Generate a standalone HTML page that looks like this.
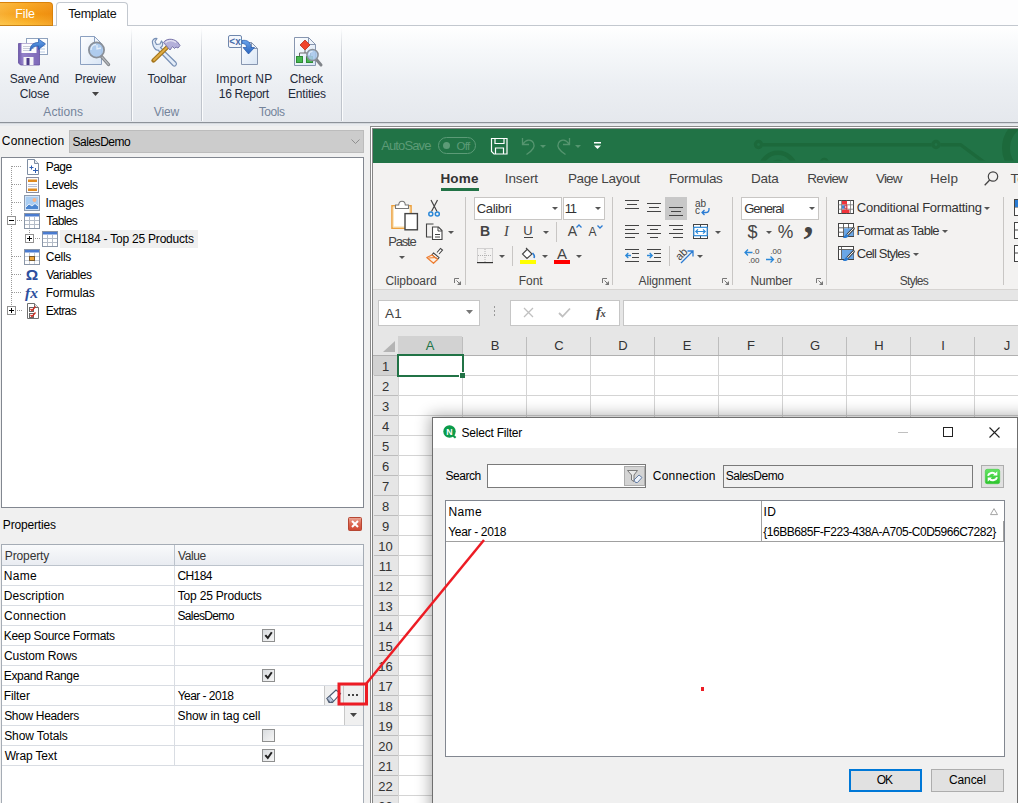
<!DOCTYPE html>
<html lang="en">
<head>
<meta charset="utf-8">
<title>Select Filter</title>
<style>
*{box-sizing:border-box;margin:0;padding:0}
html,body{width:1018px;height:803px;overflow:hidden;background:#f0f0f0}
body{position:relative;font-family:"Liberation Sans",sans-serif;font-size:12px;color:#000;line-height:1}
.a{position:absolute}
.t{position:absolute;white-space:nowrap;line-height:14px;height:14px}
.c{text-align:center}
svg{position:absolute;overflow:visible}
/* ---------- top ribbon ---------- */
#rib{left:0;top:0;width:1018px;height:123px;background:#fdfdfe}
#ribbody{left:0;top:26px;width:1018px;height:96px;background:linear-gradient(#ffffff 0,#f6f8fa 25%,#eceff3 60%,#e5e8ed 100%)}
.rl{color:#1f2a3a}
.gl{color:#74849b}
.rsep{width:2px;top:28px;height:93px;background:linear-gradient(to right,#bfc4cc 0,#bfc4cc 50%,#fbfcfd 50%);-webkit-mask-image:linear-gradient(transparent 0,#000 35%);mask-image:linear-gradient(transparent 0,#000 35%)}
/* ---------- left panel ---------- */
.tree .t{font-size:12px}
.pg .row{position:absolute;left:1px;width:361px;height:20px;border-bottom:1px solid #d9dde3;background:#fff}
.pg .row .k{position:absolute;left:2px;top:3px;line-height:14px;white-space:nowrap}
.pg .row .v{position:absolute;left:175px;top:3px;line-height:14px;white-space:nowrap}
.pg .row:after{content:"";position:absolute;left:172px;top:0;width:1px;height:20px;background:#d9dde3}
.cb{position:absolute;left:260px;top:3px;width:13px;height:13px;border:1px solid #8e8f8f;background:linear-gradient(135deg,#d9dcdf,#f6f6f6)}
/* ---------- excel ---------- */
.xl{font-size:13px;color:#444}
.xl .t{line-height:16px;height:16px}
.xsep{width:1px;top:197px;height:88px;background:#c8c6c4}
.ch{position:absolute;top:336px;height:19px;line-height:19px;text-align:center;font-size:13px;color:#333;width:64px}
.rh{position:absolute;left:373px;width:25px;height:20px;line-height:20px;text-align:center;font-size:13px;color:#333}
</style>
</head>
<body>
<div class="a" id="rib"></div>
<div class="a" id="ribbody"></div>
<div class="a" style="left:0;top:25px;width:1018px;height:1px;background:#c3c8cf"></div>
<div class="a" style="left:0;top:122px;width:1018px;height:1px;background:#8d9299"></div>
<div class="a" style="left:0;top:123px;width:1018px;height:1px;background:#d5d9de"></div>
<div class="a" style="left:0;top:124px;width:1018px;height:2px;background:#e9ebee"></div>
<div class="a" style="left:0;top:2px;width:53px;height:24px;border-radius:0 4px 0 0;background:linear-gradient(to right,rgba(255,230,150,.25),rgba(255,255,255,0) 50%,rgba(215,90,0,.22)),linear-gradient(#f9ab2a 0,#f59d14 50%,#f8a81f 70%,#fcbc38 100%);border:1px solid #d9820a;border-left:0;border-bottom-color:#c98216"></div>
<div class="t" style="left:15.30px;top:7.07px;line-height:15px;height:15px;font-size:12.5px;letter-spacing:-0.154px;color:#fff">File</div>
<div class="a" style="left:56px;top:2px;width:72px;height:24px;border-radius:4px 4px 0 0;background:#fff;border:1px solid #c3c8cf;border-bottom:0"></div>
<div class="t" style="left:68.15px;top:7.37px;line-height:15px;height:15px;font-size:12.5px;letter-spacing:-0.325px;color:#111">Template</div>
<div class="a rsep" style="left:131px"></div>
<div class="a rsep" style="left:201px"></div>
<div class="a rsep" style="left:341px"></div>
<div class="t" style="left:9.76px;top:71.84px;line-height:14px;height:14px;font-size:12px;letter-spacing:-0.291px;color:#1f2a3a">Save And</div>
<div class="t" style="left:19.70px;top:86.84px;line-height:14px;height:14px;font-size:12px;letter-spacing:-0.205px;color:#1f2a3a">Close</div>
<div class="t" style="left:74.74px;top:71.84px;line-height:14px;height:14px;font-size:12px;letter-spacing:-0.277px;color:#1f2a3a">Preview</div>
<svg style="left:92px;top:92px" width="7" height="4" viewBox="0 0 7 4"><path d="M0 0h7L3.5 4z" fill="#444"/></svg>
<div class="t" style="left:147.46px;top:71.84px;line-height:14px;height:14px;font-size:12px;letter-spacing:-0.063px;color:#1f2a3a">Toolbar</div>
<div class="t" style="left:215.92px;top:71.84px;line-height:14px;height:14px;font-size:12px;letter-spacing:0.285px;color:#1f2a3a">Import NP</div>
<div class="t" style="left:218.80px;top:86.84px;line-height:14px;height:14px;font-size:12px;letter-spacing:-0.302px;color:#1f2a3a">16 Report</div>
<div class="t" style="left:289.80px;top:71.84px;line-height:14px;height:14px;font-size:12px;letter-spacing:-0.205px;color:#1f2a3a">Check</div>
<div class="t" style="left:287.94px;top:86.84px;line-height:14px;height:14px;font-size:12px;letter-spacing:-0.183px;color:#1f2a3a">Entities</div>
<div class="t" style="left:43.30px;top:105.04px;line-height:14px;height:14px;font-size:12px;letter-spacing:0.077px;color:#74849b">Actions</div>
<div class="t" style="left:153.74px;top:105.04px;line-height:14px;height:14px;font-size:12px;letter-spacing:-0.080px;color:#74849b">View</div>
<div class="t" style="left:258.76px;top:105.04px;line-height:14px;height:14px;font-size:12px;letter-spacing:-0.415px;color:#74849b">Tools</div>
<svg style="left:18px;top:36px" width="32" height="32" viewBox="0 0 32 32"><defs><linearGradient id="fl" x1="0" y1="0" x2="1" y2="0"><stop offset="0" stop-color="#6f59ad"/><stop offset=".2" stop-color="#9381c8"/><stop offset="1" stop-color="#7d68b8"/></linearGradient>
<linearGradient id="ar" x1="0" y1="0" x2="0" y2="1"><stop offset="0" stop-color="#6aa5ec"/><stop offset="1" stop-color="#2a64bd"/></linearGradient></defs>
 <rect x="8.5" y="2.5" width="21" height="16" fill="#fdfeff" stroke="#8fa2bd"/>
 <path d="M17 7h10M17 10h10M17 13h10M17 16h10" stroke="#b9cbe3" stroke-width="1"/>
 <path d="M.5 7.5h19l2 2v19.5H2.5l-2-2z" fill="url(#fl)" stroke="#6450a0" stroke-width=".8"/>
 <rect x="3.5" y="7.5" width="15" height="9.5" fill="#fbfbfd"/>
 <path d="M5 10.5h11M5 12.5h11M5 14.5h9" stroke="#c9ccd8"/>
 <rect x="5.5" y="21" width="10" height="8" fill="#f3f3f6"/>
 <rect x="8.5" y="22" width="3" height="7" fill="#4b3a87"/>
 <path d="M12 15c0-6 3.5-8.5 8.5-8.5V3l7 5-7 5.5V10c-4 0-6.5 1.5-8.5 5z" fill="url(#ar)" stroke="#2458aa" stroke-width=".7"/></svg>
<svg style="left:79px;top:35px" width="32" height="34" viewBox="0 0 32 34"><defs><linearGradient id="pgv" x1="0" y1="0" x2="1" y2="1"><stop offset="0" stop-color="#ffffff"/><stop offset="1" stop-color="#d8e5f5"/></linearGradient></defs>
 <path d="M1.5 1.5h14l7 7v21h-21z" fill="url(#pgv)" stroke="#8ba0c0"/>
 <path d="M15.5 1.5v7h7z" fill="#eef3fa" stroke="#8ba0c0" stroke-linejoin="round"/>
 <path d="M22.5 21.5l7 8" stroke="#808489" stroke-width="3.4" stroke-linecap="round"/>
 <path d="M23 22l6.5 7.5" stroke="#b4b7bb" stroke-width="1.2" stroke-linecap="round"/>
 <circle cx="17.5" cy="15" r="7.6" fill="#a9c8ec" fill-opacity=".9" stroke="#8a9099" stroke-width="1.800"/>
 <path d="M12 15c0-3 2-5.5 5-5.5M18 10v4l4-1" stroke="#e4eefa" stroke-width="1.3" fill="none"/></svg>
<svg style="left:150px;top:37px" width="32" height="30" viewBox="0 0 32 30"><path d="M2.5 6c-1-3 2-5 4.5-4.5L5 4.5l1.5 3 3.5-.5 1.5-3c2 2 1.5 5.5-1 6.5L26 25.5c1.5 2-1 4.5-3 3L8 13C5.5 14 3 9.5 2.5 6z" fill="#e3ecf8" stroke="#7890b5" stroke-width="1.2" stroke-linejoin="round"/>
 <path d="M3.5 23.5L19 8.5" stroke="#a5761c" stroke-width="4.4" stroke-linecap="round"/>
 <path d="M4 23L19 8.5" stroke="#e0ad45" stroke-width="1.800" stroke-linecap="round"/>
 <path d="M13.5 5.5C16 1.5 23 1 27.5 5l2.5 3.5-2 2.5-2-1-1.5 1.5-2-2-2.5 3.5-6.5-7.5z" fill="#b4b0da" stroke="#7a76ab" stroke-width="1" stroke-linejoin="round"/>
 <path d="M15.5 5.5C18 3 23 3 26 5.5" stroke="#e6e4f4" stroke-width="1.3" fill="none"/></svg>
<svg style="left:227px;top:34px" width="32" height="32" viewBox="0 0 32 32"><path d="M14.5 8.5h10l6 6v16h-16z" fill="url(#pgv)" stroke="#8796b0"/>
 <path d="M24.5 8.5v6h6z" fill="#eef3fa" stroke="#8796b0" stroke-linejoin="round"/>
 <rect x="1.5" y="1.5" width="13" height="12" rx="1.5" fill="#f4f7fc" stroke="#6f87ad"/>
 <text x="8" y="11" font-size="10" font-weight="bold" text-anchor="middle" fill="#4a6ea9" font-family="Liberation Sans,sans-serif">&lt;x</text>
 <path d="M15 6.5c5.5-1 9 2 9 7h3.5L21.5 20 16 13.5h3.5c0-2.5-1.5-4-4.5-4z" fill="url(#ar)" stroke="#2458aa" stroke-width=".7"/></svg>
<svg style="left:291px;top:36px" width="34" height="32" viewBox="0 0 34 32"><path d="M3.5 1.5h14l7 7v21h-21z" fill="url(#pgv)" stroke="#8796b0"/>
 <path d="M17.5 1.5v7h7z" fill="#eef3fa" stroke="#8796b0" stroke-linejoin="round"/>
 <path d="M14 4l5 5-5 5-5-5z" fill="#f0452c" stroke="#b8301c" stroke-width=".8"/>
 <path d="M14 14v3M8.5 20v-3h11v3" stroke="#6a6a6a" fill="none"/>
 <rect x="5.5" y="20.5" width="6" height="6" fill="#46b84e" stroke="#2f8a37"/>
 <rect x="15.5" y="20.5" width="6" height="6" fill="#46b84e" stroke="#2f8a37"/>
 <path d="M25 23l5 6" stroke="#808489" stroke-width="3" stroke-linecap="round"/>
 <circle cx="21.5" cy="19" r="5.6" fill="#a9c8ec" fill-opacity=".88" stroke="#8a9099" stroke-width="1.5"/>
 <path d="M18 19c0-2 1.5-3.5 3.5-3.5" stroke="#e4eefa" stroke-width="1.2" fill="none"/></svg>
<div class="t" style="left:1.80px;top:133.84px;line-height:14px;height:14px;font-size:12px;letter-spacing:0.173px">Connection</div>
<div class="a" style="left:69px;top:130px;width:295px;height:23px;background:#cccccc;border:1px solid #bcbcbc"></div>
<div class="t" style="left:72.46px;top:134.54px;line-height:14px;height:14px;font-size:12px;letter-spacing:-0.465px">SalesDemo</div>
<svg style="left:351px;top:139px" width="9" height="6" viewBox="0 0 9 6"><path d="M.5 .5L4.5 4.5 8.5 .5" fill="none" stroke="#8f8f8f" stroke-width="1"/></svg>
<div class="a" style="left:1px;top:157px;width:363px;height:351px;background:#fff;border:1px solid #828790"></div>
<div class="a" style="left:11px;top:166px;width:1px;height:144px;background-image:linear-gradient(#9a9a9a 50%,transparent 50%);background-size:1px 2px"></div>
<div class="a" style="left:12px;top:166px;width:9px;height:1px;background-image:linear-gradient(to right,#9a9a9a 50%,transparent 50%);background-size:2px 1px"></div>
<div class="a" style="left:12px;top:184px;width:9px;height:1px;background-image:linear-gradient(to right,#9a9a9a 50%,transparent 50%);background-size:2px 1px"></div>
<div class="a" style="left:12px;top:202px;width:9px;height:1px;background-image:linear-gradient(to right,#9a9a9a 50%,transparent 50%);background-size:2px 1px"></div>
<div class="a" style="left:12px;top:256px;width:9px;height:1px;background-image:linear-gradient(to right,#9a9a9a 50%,transparent 50%);background-size:2px 1px"></div>
<div class="a" style="left:12px;top:274px;width:9px;height:1px;background-image:linear-gradient(to right,#9a9a9a 50%,transparent 50%);background-size:2px 1px"></div>
<div class="a" style="left:12px;top:292px;width:9px;height:1px;background-image:linear-gradient(to right,#9a9a9a 50%,transparent 50%);background-size:2px 1px"></div>
<div class="a" style="left:17px;top:220px;width:5px;height:1px;background-image:linear-gradient(to right,#9a9a9a 50%,transparent 50%);background-size:2px 1px"></div>
<div class="a" style="left:17px;top:310px;width:5px;height:1px;background-image:linear-gradient(to right,#9a9a9a 50%,transparent 50%);background-size:2px 1px"></div>
<div class="a" style="left:29px;top:228px;width:1px;height:5px;background-image:linear-gradient(#9a9a9a 50%,transparent 50%);background-size:1px 2px"></div>
<div class="a" style="left:35px;top:238px;width:5px;height:1px;background-image:linear-gradient(to right,#9a9a9a 50%,transparent 50%);background-size:2px 1px"></div>
<svg style="left:7px;top:216px" width="9" height="9"><rect x=".5" y=".5" width="8" height="8" fill="#fff" stroke="#919191"/><path d="M2 4.5h5" stroke="#000"/></svg>
<svg style="left:25px;top:234px" width="9" height="9"><rect x=".5" y=".5" width="8" height="8" fill="#fff" stroke="#919191"/><path d="M2 4.5h5" stroke="#000"/><path d="M4.5 2v5" stroke="#000"/></svg>
<svg style="left:7px;top:306px" width="9" height="9"><rect x=".5" y=".5" width="8" height="8" fill="#fff" stroke="#919191"/><path d="M2 4.5h5" stroke="#000"/><path d="M4.5 2v5" stroke="#000"/></svg>
<div class="a" style="left:60px;top:230px;width:138px;height:18px;background:#f0f0f0"></div>
<div class="t" style="left:45.64px;top:159.84px;line-height:14px;height:14px;font-size:12px;letter-spacing:-0.473px">Page</div>
<div class="t" style="left:45.64px;top:177.84px;line-height:14px;height:14px;font-size:12px;letter-spacing:-0.460px">Levels</div>
<div class="t" style="left:45.52px;top:195.84px;line-height:14px;height:14px;font-size:12px;letter-spacing:-0.192px">Images</div>
<div class="t" style="left:46.36px;top:213.84px;line-height:14px;height:14px;font-size:12px;letter-spacing:-0.684px">Tables</div>
<div class="t" style="left:64.20px;top:231.84px;line-height:14px;height:14px;font-size:12px;letter-spacing:-0.218px">CH184 - Top 25 Products</div>
<div class="t" style="left:45.80px;top:249.84px;line-height:14px;height:14px;font-size:12px;letter-spacing:-0.295px">Cells</div>
<div class="t" style="left:46.14px;top:267.84px;line-height:14px;height:14px;font-size:12px;letter-spacing:-0.408px">Variables</div>
<div class="t" style="left:45.64px;top:285.84px;line-height:14px;height:14px;font-size:12px;letter-spacing:-0.109px">Formulas</div>
<div class="t" style="left:45.64px;top:303.84px;line-height:14px;height:14px;font-size:12px;letter-spacing:-0.588px">Extras</div>
<svg style="left:25px;top:159px" width="16" height="16" viewBox="0 0 16 16"><path d="M2.5 .5h7l4 4v11h-11z" fill="#fff" stroke="#7f8ea3"/><path d="M9.5 .5v4h4" fill="#e6ebf2" stroke="#7f8ea3"/><path d="M4.5 8.5h4M6.5 6.5v4M8 11.5h5M10.5 9v5" stroke="#2f5fb3"/></svg>
<svg style="left:25px;top:177px" width="16" height="16" viewBox="0 0 16 16"><rect x="1.5" y=".5" width="12" height="15" fill="#fbfbfd" stroke="#8b8fa0"/><rect x="3" y="2.5" width="9" height="2.5" fill="#e08a1e"/><path d="M3 7.5h9M3 9.5h9" stroke="#b7c0d6"/><rect x="3" y="11.5" width="9" height="2.5" fill="#e08a1e"/></svg>
<svg style="left:24px;top:195px" width="16" height="16" viewBox="0 0 16 16"><rect x=".5" y=".5" width="15" height="15" fill="#cfe2f7" stroke="#8c9bb0"/><rect x="2" y="2" width="12" height="12" fill="#a9cdf2"/><circle cx="10.5" cy="5" r="2" fill="#f7b48a"/><path d="M2 12l3-3 3 2 3-2.5 3 2.5v3H2z" fill="#4b86d1"/><path d="M2 12l3-3 3 2 3-2.5 3 2.5" stroke="#fff" fill="none" stroke-width=".8"/></svg>
<svg style="left:24px;top:213px" width="16" height="16" viewBox="0 0 16 16"><rect x=".5" y=".5" width="15" height="15" fill="#fff" stroke="#8a96a8"/><rect x="1" y="1" width="14" height="2.5" fill="#4a7bd0"/><path d="M1 7.5h14M1 11.5h14M5.5 4v11M10.5 4v11" stroke="#b4bcc8"/></svg>
<svg style="left:42px;top:231px" width="16" height="16" viewBox="0 0 16 16"><rect x=".5" y=".5" width="15" height="15" fill="#fff" stroke="#8a96a8"/><rect x="1" y="1" width="14" height="2.5" fill="#4a7bd0"/><path d="M1 7.5h14M1 11.5h14M5.5 4v11M10.5 4v11" stroke="#b4bcc8"/></svg>
<svg style="left:24px;top:249px" width="16" height="16" viewBox="0 0 16 16"><rect x=".5" y=".5" width="15" height="15" fill="#fff" stroke="#8a96a8"/><rect x="1" y="1" width="14" height="2.5" fill="#4a7bd0"/><path d="M1 7.5h14M1 11.5h14M5.5 4v11M10.5 4v11" stroke="#c6ccd6"/><rect x="5.5" y="7.5" width="5" height="4" fill="#f0a63a" stroke="#7a5a2a"/></svg>
<div class="t" style="left:24px;top:266px;font-size:15.5px;line-height:18px;height:18px;font-weight:bold;color:#2d4f9e;width:16px;text-align:center">&#937;</div>
<div class="t" style="left:25px;top:284px;font-family:'Liberation Serif',serif;font-style:italic;font-weight:bold;font-size:15.5px;line-height:18px;height:18px;color:#2d4f9e;letter-spacing:0">fx</div>
<svg style="left:25px;top:303px" width="16" height="16" viewBox="0 0 16 16"><path d="M2.5 .5h7l4 4v11h-11z" fill="#fff" stroke="#6f6f6f"/><path d="M9.5 .5v4h4" fill="#e6e6e6" stroke="#6f6f6f"/><rect x="4.5" y="4.5" width="4" height="4" fill="#fff" stroke="#666"/><rect x="4.5" y="10.5" width="4" height="4" fill="#fff" stroke="#666"/><path d="M5.5 6l1.5 1.5 3.5-4M5.5 12l1.5 1.5 3.5-4" stroke="#d0281c" stroke-width="1.300" fill="none"/></svg>
<div class="t" style="left:2.84px;top:518.24px;line-height:14px;height:14px;font-size:12px;letter-spacing:-0.182px">Properties</div>
<svg style="left:348px;top:517px" width="14" height="14" viewBox="0 0 14 14"><defs><linearGradient id="rx" x1="0" y1="0" x2="0" y2="1"><stop offset="0" stop-color="#eba898"/><stop offset=".5" stop-color="#dc6650"/><stop offset="1" stop-color="#cf4630"/></linearGradient></defs><rect x=".5" y=".5" width="13" height="13" rx="1" fill="url(#rx)" stroke="#b64632"/><path d="M4 4l6 6M10 4l-6 6" stroke="#fff" stroke-width="2"/></svg>
<div class="a" style="left:1px;top:544px;width:363px;height:270px;background:#fff;border:1px solid #a5acb5"></div>
<div class="a" style="left:2px;top:545px;width:361px;height:21px;background:linear-gradient(#f9fafb,#e9ecf1);border-bottom:1px solid #bcc3cc"></div>
<div class="a" style="left:174px;top:545px;width:1px;height:21px;background:#bcc3cc"></div>
<div class="t" style="left:4.84px;top:549.24px;line-height:14px;height:14px;font-size:12px;letter-spacing:-0.129px;color:#333">Property</div>
<div class="t" style="left:177.94px;top:549.24px;line-height:14px;height:14px;font-size:12px;letter-spacing:-0.390px;color:#333">Value</div>
<div class="a" style="left:2px;top:585px;width:361px;height:1px;background:#d9dde3"></div>
<div class="t" style="left:3.74px;top:569.14px;line-height:14px;height:14px;font-size:12px;letter-spacing:0.307px">Name</div>
<div class="t" style="left:177.40px;top:569.14px;line-height:14px;height:14px;font-size:12px;letter-spacing:-0.590px">CH184</div>
<div class="a" style="left:2px;top:605px;width:361px;height:1px;background:#d9dde3"></div>
<div class="t" style="left:3.74px;top:589.14px;line-height:14px;height:14px;font-size:12px;letter-spacing:0.034px">Description</div>
<div class="t" style="left:177.76px;top:589.14px;line-height:14px;height:14px;font-size:12px;letter-spacing:-0.189px">Top 25 Products</div>
<div class="a" style="left:2px;top:625px;width:361px;height:1px;background:#d9dde3"></div>
<div class="t" style="left:4.10px;top:609.14px;line-height:14px;height:14px;font-size:12px;letter-spacing:0.129px">Connection</div>
<div class="t" style="left:177.46px;top:609.14px;line-height:14px;height:14px;font-size:12px;letter-spacing:-0.640px">SalesDemo</div>
<div class="a" style="left:2px;top:645px;width:361px;height:1px;background:#d9dde3"></div>
<div class="t" style="left:3.74px;top:629.14px;line-height:14px;height:14px;font-size:12px;letter-spacing:-0.301px">Keep Source Formats</div>
<div class="cb" style="left:262px;top:629px"><svg style="left:1px;top:1px" width="9" height="9"><path d="M1.300 4.200l2.5 2.800 4-5.800" fill="none" stroke="#222" stroke-width="2"/></svg></div>
<div class="a" style="left:2px;top:665px;width:361px;height:1px;background:#d9dde3"></div>
<div class="t" style="left:4.10px;top:649.14px;line-height:14px;height:14px;font-size:12px;letter-spacing:-0.148px">Custom Rows</div>
<div class="a" style="left:2px;top:685px;width:361px;height:1px;background:#d9dde3"></div>
<div class="t" style="left:3.74px;top:669.14px;line-height:14px;height:14px;font-size:12px;letter-spacing:-0.344px">Expand Range</div>
<div class="cb" style="left:262px;top:669px"><svg style="left:1px;top:1px" width="9" height="9"><path d="M1.300 4.200l2.5 2.800 4-5.800" fill="none" stroke="#222" stroke-width="2"/></svg></div>
<div class="a" style="left:2px;top:705px;width:361px;height:1px;background:#d9dde3"></div>
<div class="t" style="left:3.74px;top:689.14px;line-height:14px;height:14px;font-size:12px;letter-spacing:-0.100px">Filter</div>
<div class="t" style="left:177.70px;top:689.14px;line-height:14px;height:14px;font-size:12px;letter-spacing:-0.534px">Year - 2018</div>
<div class="a" style="left:2px;top:725px;width:361px;height:1px;background:#d9dde3"></div>
<div class="t" style="left:4.16px;top:709.14px;line-height:14px;height:14px;font-size:12px;letter-spacing:-0.333px">Show Headers</div>
<div class="t" style="left:177.46px;top:709.14px;line-height:14px;height:14px;font-size:12px;letter-spacing:-0.079px">Show in tag cell</div>
<div class="a" style="left:2px;top:745px;width:361px;height:1px;background:#d9dde3"></div>
<div class="t" style="left:4.16px;top:729.14px;line-height:14px;height:14px;font-size:12px;letter-spacing:-0.084px">Show Totals</div>
<div class="cb" style="left:262px;top:729px"></div>
<div class="a" style="left:2px;top:765px;width:361px;height:1px;background:#d9dde3"></div>
<div class="t" style="left:4.64px;top:749.14px;line-height:14px;height:14px;font-size:12px;letter-spacing:-0.150px">Wrap Text</div>
<div class="cb" style="left:262px;top:749px"><svg style="left:1px;top:1px" width="9" height="9"><path d="M1.300 4.200l2.5 2.800 4-5.800" fill="none" stroke="#222" stroke-width="2"/></svg></div>
<div class="a" style="left:174px;top:566px;width:1px;height:200px;background:#d9dde3"></div>
<div class="a" style="left:324px;top:686px;width:19px;height:19px;background:#f0f0f0;border-left:1px solid #c8c8c8"></div>
<svg style="left:326px;top:688px" width="16" height="16" viewBox="0 0 16 16"><path d="M1 10.5l9-8.5 4.5 3.5-8 9h-3.5z" fill="#fbfcfe" stroke="#4c5a70" stroke-width="1.100"/><path d="M4.5 14.5L1 10.5l2.5-2.5 4 4.5z" fill="#b9c7de" stroke="#4c5a70" stroke-width=".9"/></svg>
<div class="a" style="left:343px;top:686px;width:20px;height:19px;background:#f0f0f0;border-left:1px solid #c8c8c8"></div>
<div class="a" style="left:348px;top:694px;width:2px;height:2px;background:#444;box-shadow:4px 0 #444,8px 0 #444"></div>
<div class="a" style="left:344px;top:706px;width:19px;height:19px;background:#f0f0f0;border-left:1px solid #c8c8c8"></div>
<svg style="left:350px;top:713px" width="7" height="4" viewBox="0 0 7 4"><path d="M0 0h7L3.5 4z" fill="#444"/></svg>
<div class="a xl" style="left:0;top:0;width:1018px;height:803px">
<div class="a" style="left:370px;top:126px;width:660px;height:690px;border:1px solid #8a8a8a;background:#fff"></div>
<div class="a" style="left:372px;top:128px;width:660px;height:690px;border:1px solid #858585;border-right:0;border-bottom:0;background:#e6e6e6"></div>
<div class="a" style="left:373px;top:129px;width:645px;height:34px;background:#217346;overflow:hidden">
<svg style="left:0;top:0" width="645" height="34" viewBox="373 129 645 34"><defs><clipPath id="cc"><rect x="373" y="129" width="645" height="31.5"/></clipPath></defs><g fill="none" stroke="#1c693b" stroke-width="3.4" clip-path="url(#cc)"><circle cx="758.5" cy="144.5" r="3.1" stroke-width="3.2"/><path d="M763 144.7h168.5"/><circle cx="936" cy="144.5" r="3.1" stroke-width="3.2"/><path d="M940.5 144.7h20l27 20"/><circle cx="1033.5" cy="148" r="27.5" stroke-width="8"/><circle cx="778" cy="170.2" r="17.5" stroke-width="4.6"/><circle cx="778" cy="170.2" r="9.5" stroke-width="2"/><circle cx="824.3" cy="162.5" r="3.5" stroke-width="2.5"/></g></svg>
</div>
<div class="t" style="left:381.20px;top:137.50px;line-height:16px;height:16px;font-size:13px;letter-spacing:-0.881px;color:#5c9b77">AutoSave</div>
<div class="a" style="left:438px;top:137px;width:38px;height:17px;border:1px solid #5c9b77;border-radius:9px"></div>
<div class="a" style="left:443px;top:142px;width:7px;height:7px;border-radius:4px;background:#5c9b77"></div>
<div class="t" style="left:456.48px;top:139.02px;line-height:14px;height:14px;font-size:11.5px;letter-spacing:-0.681px;color:#5c9b77">Off</div>
<svg style="left:491px;top:138px" width="17" height="17" viewBox="0 0 17 17"><path d="M.5 .5h15.5v15.5H3l-2.5-2.5z" fill="none" stroke="#fff" stroke-width="1.2"/><path d="M4 .5v5h9v-5M4.5 16v-6h8v6" fill="none" stroke="#fff" stroke-width="1.2"/></svg>
<svg style="left:520px;top:136px" width="16" height="20" viewBox="0 0 16 20"><path d="M2.5 2v6.5H9M3 8C6 3 11.5 3 13.5 7S12 15 6.5 18.5" fill="none" stroke="#55956f" stroke-width="1.3"/></svg>
<svg style="left:540.0px;top:144.5px" width="6" height="3" viewBox="0 0 6 3"><path d="M0 0h6 L3.0 3z" fill="#55956f"/></svg>
<svg style="left:556px;top:136px" width="16" height="20" viewBox="0 0 16 20"><path d="M13.5 2v6.5H7M13 8C10 3 4.5 3 2.5 7S4 15 9.5 18.5" fill="none" stroke="#55956f" stroke-width="1.3"/></svg>
<svg style="left:575.0px;top:144.5px" width="6" height="3" viewBox="0 0 6 3"><path d="M0 0h6 L3.0 3z" fill="#55956f"/></svg>
<svg style="left:594px;top:142px" width="7" height="8" viewBox="0 0 7 8"><path d="M0 .75h7" stroke="#fff" stroke-width="1.5"/><path d="M0 3.5h7L3.5 7z" fill="#fff"/></svg>
<div class="a" style="left:373px;top:163px;width:645px;height:126px;background:#f3f2f1"></div>
<div class="a" style="left:373px;top:289px;width:645px;height:1px;background:#d6d4d2"></div>
<div class="t" style="left:440.42px;top:170.92px;line-height:16px;height:16px;font-size:13.5px;letter-spacing:0.196px;color:#333;font-weight:bold">Home</div>
<div class="t" style="left:504.79px;top:170.92px;line-height:16px;height:16px;font-size:13.5px;letter-spacing:-0.093px;color:#444">Insert</div>
<div class="t" style="left:567.92px;top:170.92px;line-height:16px;height:16px;font-size:13.5px;letter-spacing:-0.366px;color:#444">Page Layout</div>
<div class="t" style="left:668.92px;top:170.92px;line-height:16px;height:16px;font-size:13.5px;letter-spacing:-0.335px;color:#444">Formulas</div>
<div class="t" style="left:750.92px;top:170.92px;line-height:16px;height:16px;font-size:13.5px;letter-spacing:-0.235px;color:#444">Data</div>
<div class="t" style="left:807.32px;top:170.92px;line-height:16px;height:16px;font-size:13.5px;letter-spacing:-0.720px;color:#444">Review</div>
<div class="t" style="left:875.93px;top:170.92px;line-height:16px;height:16px;font-size:13.5px;letter-spacing:-0.786px;color:#444">View</div>
<div class="t" style="left:929.92px;top:170.92px;line-height:16px;height:16px;font-size:13.5px;letter-spacing:0.092px;color:#444">Help</div>
<div class="a" style="left:441px;top:188px;width:38px;height:3px;background:#217346"></div>
<svg style="left:984px;top:171px" width="15" height="15" viewBox="0 0 15 15"><circle cx="9" cy="5.5" r="4.7" fill="none" stroke="#444" stroke-width="1.2"/><path d="M5.7 9L.7 14.3" stroke="#444" stroke-width="1.3"/></svg>
<div class="t" style="left:1010.53px;top:170.92px;line-height:16px;height:16px;font-size:13.5px;color:#444">Te</div>
<div class="a xsep" style="left:465px"></div>
<div class="a xsep" style="left:612px"></div>
<div class="a xsep" style="left:732px"></div>
<div class="a xsep" style="left:826px"></div>
<div class="a xsep" style="left:1003px"></div>
<div class="t" style="left:385.40px;top:274.44px;line-height:14px;height:14px;font-size:12px;letter-spacing:-0.022px;color:#444">Clipboard</div>
<div class="t" style="left:518.84px;top:274.44px;line-height:14px;height:14px;font-size:12px;letter-spacing:-0.060px;color:#444">Font</div>
<div class="t" style="left:638.50px;top:274.44px;line-height:14px;height:14px;font-size:12px;letter-spacing:-0.110px;color:#444">Alignment</div>
<div class="t" style="left:750.54px;top:274.44px;line-height:14px;height:14px;font-size:12px;letter-spacing:-0.204px;color:#444">Number</div>
<div class="t" style="left:899.86px;top:274.44px;line-height:14px;height:14px;font-size:12px;letter-spacing:-0.748px;color:#444">Styles</div>
<svg style="left:453.5px;top:278px" width="7" height="7" viewBox="0 0 7 7"><path d="M.5 5V.5H5" fill="none" stroke="#777"/><path d="M2.5 2.5l3 3" fill="none" stroke="#777"/><path d="M7 3v4H3z" fill="#777"/></svg>
<svg style="left:601.5px;top:278px" width="7" height="7" viewBox="0 0 7 7"><path d="M.5 5V.5H5" fill="none" stroke="#777"/><path d="M2.5 2.5l3 3" fill="none" stroke="#777"/><path d="M7 3v4H3z" fill="#777"/></svg>
<svg style="left:721.5px;top:278px" width="7" height="7" viewBox="0 0 7 7"><path d="M.5 5V.5H5" fill="none" stroke="#777"/><path d="M2.5 2.5l3 3" fill="none" stroke="#777"/><path d="M7 3v4H3z" fill="#777"/></svg>
<svg style="left:815.5px;top:278px" width="7" height="7" viewBox="0 0 7 7"><path d="M.5 5V.5H5" fill="none" stroke="#777"/><path d="M2.5 2.5l3 3" fill="none" stroke="#777"/><path d="M7 3v4H3z" fill="#777"/></svg>
<svg style="left:388px;top:199px" width="34" height="34" viewBox="0 0 34 34"><rect x="4" y="6.8" width="19" height="22.4" fill="#fff" stroke="#eda13e" stroke-width="1.6"/><rect x="5.3" y="8.1" width="16.4" height="19.8" fill="none" stroke="#fbe3b4" stroke-width="1"/><path d="M7.5 9.5V6h3.2c.3-5 6.3-5 6.6 0h3.2v3.5z" fill="#fff" stroke="#777" stroke-width="1.1"/><rect x="17" y="14.6" width="12.4" height="16.2" fill="#fff" stroke="#444" stroke-width="1.4"/></svg>
<div class="t" style="left:388.16px;top:234.10px;line-height:16px;height:16px;font-size:13px;letter-spacing:-1.148px;color:#444">Paste</div>
<svg style="left:398.5px;top:256.0px" width="6" height="3" viewBox="0 0 6 3"><path d="M0 0h6 L3.0 3z" fill="#555"/></svg>
<svg style="left:427px;top:200px" width="14" height="17" viewBox="0 0 14 17"><path d="M4 0l6 11.5M10.5 0L4.5 11.5" stroke="#444" stroke-width="1.2" fill="none"/><circle cx="3.8" cy="14" r="2" fill="none" stroke="#2b88d8" stroke-width="1.5"/><circle cx="10.3" cy="14" r="2" fill="none" stroke="#2b88d8" stroke-width="1.5"/></svg>
<svg style="left:426px;top:223px" width="17" height="18" viewBox="0 0 17 18"><path d="M7.5 1H.5v13h5" fill="none" stroke="#444" stroke-width="1.1"/><path d="M6.5 4h6l3.5 3.5v9h-9.5z" fill="#fff" stroke="#444" stroke-width="1.1"/><path d="M12 4v4h4M9 11.5h5M9 14h5" fill="none" stroke="#444"/></svg>
<svg style="left:447.5px;top:230.5px" width="6" height="3" viewBox="0 0 6 3"><path d="M0 0h6 L3.0 3z" fill="#555"/></svg>
<svg style="left:426px;top:247px" width="17" height="18" viewBox="0 0 17 18"><path d="M11 5.5l3.5-4 2 1.5-3.5 4" fill="#fff" stroke="#444" stroke-width="1.1"/><path d="M7.5 6l5.5 4.5-1.5 2L6 8z" fill="#fff" stroke="#444" stroke-width="1.1"/><path d="M6 8L.8 10.5l6.7 5.8 4-3.8z" fill="#fdf0e3" stroke="#ed7d31" stroke-width="1.2" stroke-linejoin="round"/><path d="M2.5 11l8-.5" stroke="#ed7d31" stroke-width="1" fill="none"/></svg>
<div class="a" style="left:474px;top:197px;width:88px;height:23px;background:#fff;border:1px solid #c8c6c4"></div>
<div class="a" style="left:563px;top:197px;width:42px;height:23px;background:#fff;border:1px solid #c8c6c4"></div>
<div class="t" style="left:476.65px;top:200.50px;line-height:16px;height:16px;font-size:13px;letter-spacing:-0.316px;color:#333">Calibri</div>
<div class="t" style="left:564.73px;top:200.50px;line-height:16px;height:16px;font-size:13px;letter-spacing:-1.2px;color:#333">11</div>
<svg style="left:551.5px;top:206.5px" width="6" height="3" viewBox="0 0 6 3"><path d="M0 0h6 L3.0 3z" fill="#555"/></svg>
<svg style="left:594.5px;top:206.5px" width="6" height="3" viewBox="0 0 6 3"><path d="M0 0h6 L3.0 3z" fill="#555"/></svg>
<div class="t" style="left:480.09px;top:222.85px;line-height:17px;height:17px;font-size:14px;color:#444;font-weight:bold">B</div>
<div class="t" style="left:504.07px;top:222.81px;line-height:17px;height:17px;font-size:14.5px;color:#444;font-style:italic;font-family:'Liberation Serif',serif">I</div>
<div class="t" style="left:523.23px;top:223.00px;line-height:16px;height:16px;font-size:13px;color:#444">U</div>
<div class="a" style="left:524px;top:237px;width:9px;height:1px;background:#444"></div>
<svg style="left:542.5px;top:230.5px" width="6" height="3" viewBox="0 0 6 3"><path d="M0 0h6 L3.0 3z" fill="#555"/></svg>
<div class="a" style="left:556px;top:222px;width:1px;height:20px;background:#c8c6c4"></div>
<div class="t" style="left:567.70px;top:223.15px;line-height:17px;height:17px;font-size:14px;color:#444">A</div>
<svg style="left:576px;top:224px" width="6" height="4" viewBox="0 0 6 4"><path d="M.5 3.5L3 1l2.5 2.5" fill="none" stroke="#2b7cd3" stroke-width="1.3"/></svg>
<div class="t" style="left:588.60px;top:225.34px;line-height:14px;height:14px;font-size:12px;color:#444">A</div>
<svg style="left:597px;top:225px" width="6" height="4" viewBox="0 0 6 4"><path d="M.5 .5L3 3 5.5 .5" fill="none" stroke="#2b7cd3" stroke-width="1.3"/></svg>
<svg style="left:477px;top:248px" width="16" height="16" viewBox="0 0 16 16"><path d="M.5 .5h15M.5 .5v13M15.5 .5v13M8 1v13M1 7.5h14" fill="none" stroke="#b0b0b0" stroke-dasharray="1 1"/><path d="M0 14.6h16" stroke="#333" stroke-width="1.2"/></svg>
<svg style="left:498.5px;top:254.5px" width="6" height="3" viewBox="0 0 6 3"><path d="M0 0h6 L3.0 3z" fill="#555"/></svg>
<div class="a" style="left:512px;top:246px;width:1px;height:20px;background:#c8c6c4"></div>
<svg style="left:520px;top:247px" width="17" height="18" viewBox="0 0 17 18"><path d="M6 1l6 6-5 4.5L2.5 7 7 2.5" fill="#fff" stroke="#444" stroke-width="1.1"/><path d="M12.5 6c1.5 1.5 2.5 3 1.5 5" fill="none" stroke="#2b7cd3" stroke-width="1.6"/><rect x="0" y="13" width="16" height="4" fill="#ffff00"/></svg>
<svg style="left:541.5px;top:254.5px" width="6" height="3" viewBox="0 0 6 3"><path d="M0 0h6 L3.0 3z" fill="#555"/></svg>
<div class="t" style="left:557.00px;top:245.30px;line-height:18px;height:18px;font-size:15px;color:#444">A</div>
<div class="a" style="left:554px;top:260px;width:16px;height:4px;background:#ff0000"></div>
<svg style="left:575.5px;top:254.5px" width="6" height="3" viewBox="0 0 6 3"><path d="M0 0h6 L3.0 3z" fill="#555"/></svg>
<div class="a" style="left:665px;top:197px;width:22px;height:23px;background:#c8c8c8"></div>
<svg style="left:625px;top:200px" width="15" height="15" viewBox="0 0 15 15"><path d="M0 0.5h14M2 4.5h10M0 8.5h14" stroke="#444" fill="none"/></svg>
<svg style="left:647px;top:203px" width="15" height="15" viewBox="0 0 15 15"><path d="M0 0.5h14M2 4.5h10M0 8.5h14" stroke="#444" fill="none"/></svg>
<svg style="left:669px;top:207px" width="15" height="15" viewBox="0 0 15 15"><path d="M0 0.5h14M2 4.5h10M0 8.5h14" stroke="#444" fill="none"/></svg>
<div class="t" style="left:695px;top:199.5px;font-size:10px;line-height:7.5px;height:16px;color:#444">ab<br>c</div>
<svg style="left:701px;top:208px" width="9" height="8" viewBox="0 0 9 8"><path d="M8 0v1.5c0 2-1.5 3-3 3H1M3.5 2L1 4.5 3.5 7" fill="none" stroke="#2b7cd3" stroke-width="1.3"/></svg>
<svg style="left:625px;top:225px" width="15" height="15" viewBox="0 0 15 15"><path d="M0 0.5h14M0 4.5h10M0 8.5h14M0 12.5h10" stroke="#444" fill="none"/></svg>
<svg style="left:647px;top:225px" width="15" height="15" viewBox="0 0 15 15"><path d="M0 0.5h14M3 4.5h8M0 8.5h14M3 12.5h8" stroke="#444" fill="none"/></svg>
<svg style="left:669px;top:225px" width="15" height="15" viewBox="0 0 15 15"><path d="M0 0.5h14M4 4.5h10M0 8.5h14M4 12.5h10" stroke="#444" fill="none"/></svg>
<svg style="left:693px;top:224px" width="16" height="16" viewBox="0 0 16 16"><rect x=".5" y=".5" width="14" height="14" fill="#fff" stroke="#444"/><path d="M7.5 .5V3M7.5 12v2.5" stroke="#444" fill="none"/><rect x=".8" y="3.3" width="13.4" height="8.4" fill="#fff" stroke="#2b88d8" stroke-width="1.2"/><path d="M3 7.5h9M5 5.3L2.8 7.5 5 9.7M10 5.3l2.2 2.2L10 9.7" stroke="#2b88d8" fill="none" stroke-width="1.2"/></svg>
<svg style="left:714.5px;top:230.5px" width="6" height="3" viewBox="0 0 6 3"><path d="M0 0h6 L3.0 3z" fill="#555"/></svg>
<svg style="left:625px;top:249px" width="15" height="14" viewBox="0 0 15 14"><path d="M0 .5h14M7 4.5h7M7 8.5h7M0 12.5h14" stroke="#444" fill="none"/><path d="M6 6.5H.8M3.3 4L.8 6.5 3.3 9" stroke="#2b88d8" fill="none" stroke-width="1.3"/></svg>
<svg style="left:647px;top:249px" width="15" height="14" viewBox="0 0 15 14"><path d="M0 .5h14M7 4.5h7M7 8.5h7M0 12.5h14" stroke="#444" fill="none"/><path d="M0 6.5h5.2M2.7 4l2.5 2.5L2.7 9" stroke="#2b88d8" fill="none" stroke-width="1.3"/></svg>
<div class="a" style="left:669px;top:246px;width:1px;height:20px;background:#c8c6c4"></div>
<div class="t" style="left:676px;top:244px;font-size:11px;color:#444;transform:rotate(-45deg);transform-origin:8px 10px">ab</div>
<svg style="left:680px;top:250px" width="14" height="14" viewBox="0 0 14 14"><path d="M1 13L12.5 1.5M7.5 1h5.5v5.5" fill="none" stroke="#2b7cd3" stroke-width="1.3"/></svg>
<svg style="left:696.5px;top:254.5px" width="6" height="3" viewBox="0 0 6 3"><path d="M0 0h6 L3.0 3z" fill="#555"/></svg>
<div class="a" style="left:741px;top:197px;width:78px;height:23px;background:#fff;border:1px solid #c8c6c4"></div>
<div class="t" style="left:744.25px;top:200.50px;line-height:16px;height:16px;font-size:13px;letter-spacing:-1.020px;color:#333">General</div>
<svg style="left:808.5px;top:206.5px" width="6" height="3" viewBox="0 0 6 3"><path d="M0 0h6 L3.0 3z" fill="#555"/></svg>
<div class="t" style="left:747.42px;top:220.76px;line-height:22px;height:22px;font-size:18px;color:#444">$</div>
<svg style="left:765.5px;top:230.5px" width="6" height="3" viewBox="0 0 6 3"><path d="M0 0h6 L3.0 3z" fill="#555"/></svg>
<div class="t" style="left:777.69px;top:222.04px;line-height:21px;height:21px;font-size:17.5px;color:#444">%</div>
<div class="t" style="left:801.50px;top:216.00px;line-height:48px;height:48px;font-size:40px;color:#444;font-weight:bold;font-family:'Liberation Serif',serif">’</div>
<div class="t" style="left:745px;top:248px;font-size:8px;line-height:8.5px;height:17px;color:#444;text-align:right;width:14.5px">.0<br>.00</div>
<svg style="left:744px;top:249px" width="9" height="7" viewBox="0 0 9 7"><path d="M8.5 3.5H1M4 .5L1 3.5l3 3" fill="none" stroke="#2b88d8" stroke-width="1.3"/></svg>
<div class="t" style="left:767px;top:248px;font-size:8px;line-height:8.5px;height:17px;color:#444;text-align:right;width:14.5px">.00<br>.0</div>
<svg style="left:766px;top:256px" width="9" height="7" viewBox="0 0 9 7"><path d="M0 3.5h7.5M4.5 .5l3 3-3 3" fill="none" stroke="#2b88d8" stroke-width="1.3"/></svg>
<svg style="left:838px;top:200px" width="16" height="14" viewBox="0 0 16 14"><rect x=".5" y=".5" width="15" height="13" fill="#fff" stroke="#444"/><path d="M.5 4.8h15M.5 9.2h15M3.5 .5v13M8.5 .5v13M12.5 .5v13" stroke="#777" stroke-width=".8" fill="none"/><rect x="4" y="1" width="5" height="3.4" fill="#f0333a"/><rect x="4" y="5.3" width="3" height="3.4" fill="#3b86d6"/><rect x="7" y="5.3" width="2" height="3.4" fill="none" stroke="#f0333a" stroke-width=".8"/><rect x="4" y="9.7" width="7.5" height="3.3" fill="#f0333a"/></svg>
<svg style="left:838px;top:223px" width="17" height="15" viewBox="0 0 17 15"><rect x=".5" y=".5" width="15" height="13" fill="#fff" stroke="#444"/><path d="M.5 4.8h15M.5 9.2h15M5.5 .5v13M10.5 .5v13" stroke="#555" stroke-width=".9" fill="none"/><rect x="6" y="5.3" width="9.5" height="7.7" fill="#6aa6e6"/><path d="M15.5 5.5L8.5 12.8" stroke="#444" stroke-width="2.6" stroke-linecap="round"/><path d="M15.3 5.7L9.5 11.8" stroke="#fff" stroke-width="1" stroke-linecap="round"/><path d="M8.8 11l2 2c-1.5 2.2-4 2.2-6 1.8 1.5-.8 1.5-2.8 4-3.8z" fill="#2b7cd3"/></svg>
<svg style="left:838px;top:246px" width="17" height="15" viewBox="0 0 17 15"><rect x=".5" y=".5" width="15" height="13" fill="#fff" stroke="#444"/><path d="M.5 3.5h15M3.5 .5v13" stroke="#555" stroke-width=".9" fill="none"/><rect x="4" y="4" width="11.5" height="9" fill="#6aa6e6"/><path d="M15.5 5.5L8.5 12.8" stroke="#444" stroke-width="2.6" stroke-linecap="round"/><path d="M15.3 5.7L9.5 11.8" stroke="#fff" stroke-width="1" stroke-linecap="round"/><path d="M8.8 11l2 2c-1.5 2.2-4 2.2-6 1.8 1.5-.8 1.5-2.8 4-3.8z" fill="#2b7cd3"/></svg>
<div class="t" style="left:856.85px;top:199.50px;line-height:16px;height:16px;font-size:13px;letter-spacing:-0.275px;color:#333">Conditional Formatting</div>
<svg style="left:983.5px;top:206.5px" width="6" height="3" viewBox="0 0 6 3"><path d="M0 0h6 L3.0 3z" fill="#555"/></svg>
<div class="t" style="left:856.46px;top:222.50px;line-height:16px;height:16px;font-size:13px;letter-spacing:-0.702px;color:#333">Format as Table</div>
<svg style="left:941.5px;top:229.5px" width="6" height="3" viewBox="0 0 6 3"><path d="M0 0h6 L3.0 3z" fill="#555"/></svg>
<div class="t" style="left:856.85px;top:245.50px;line-height:16px;height:16px;font-size:13px;letter-spacing:-0.812px;color:#333">Cell Styles</div>
<svg style="left:912.5px;top:252.5px" width="6" height="3" viewBox="0 0 6 3"><path d="M0 0h6 L3.0 3z" fill="#555"/></svg>
<svg style="left:1014px;top:199px" width="6" height="17" viewBox="0 0 6 17"><rect x=".5" y=".5" width="16" height="16" fill="#fff" stroke="#444"/><path d="M.5 8h6" stroke="#444"/></svg>
<svg style="left:1014px;top:222px" width="6" height="17" viewBox="0 0 6 17"><rect x=".5" y=".5" width="16" height="16" fill="#fff" stroke="#444"/><path d="M.5 8h6" stroke="#444"/></svg>
<svg style="left:1014px;top:245px" width="6" height="17" viewBox="0 0 6 17"><rect x=".5" y=".5" width="16" height="16" fill="#fff" stroke="#444"/><path d="M.5 8h6" stroke="#444"/></svg>
<svg style="left:1015px;top:200px" width="4" height="7" viewBox="0 0 4 7"><rect x="0" y="0" width="4" height="7" fill="#2b7cd3"/></svg>
<div class="a" style="left:378px;top:300px;width:102px;height:26px;background:#fff;border:1px solid #c6c6c6"></div>
<div class="t" style="left:385.00px;top:305.62px;line-height:16px;height:16px;font-size:13.5px;letter-spacing:0.137px;color:#444">A1</div>
<svg style="left:465.5px;top:310.0px" width="7" height="4" viewBox="0 0 7 4"><path d="M0 0h7 L3.5 4z" fill="#777"/></svg>
<div class="a" style="left:494px;top:306px;width:1px;height:2px;background:#999;box-shadow:0 4px #999,0 8px #999"></div>
<div class="a" style="left:510px;top:300px;width:110px;height:26px;background:#fff;border:1px solid #c6c6c6"></div>
<svg style="left:523px;top:307px" width="11" height="11" viewBox="0 0 11 11"><path d="M1 1l9 9M10 1l-9 9" stroke="#c0c0c0" stroke-width="1.3" fill="none"/></svg>
<svg style="left:558px;top:307px" width="13" height="11" viewBox="0 0 13 11"><path d="M1 6l3.5 3.5L12 1.5" stroke="#c0c0c0" stroke-width="1.8" fill="none"/></svg>
<div class="t" style="left:596px;top:304px;font-size:15px;color:#444;font-style:italic;font-weight:bold;font-family:'Liberation Serif',serif;letter-spacing:-.5px">f<span style="font-size:10.5px">x</span></div>
<div class="a" style="left:623px;top:300px;width:400px;height:26px;background:#fff;border:1px solid #c6c6c6"></div>
<div class="a" style="left:373px;top:336px;width:645px;height:20px;background:#e6e6e6;border-bottom:1px solid #b0b0b0"></div>
<div class="a" style="left:373px;top:356px;width:26px;height:460px;background:#e6e6e6;border-right:1px solid #a6a6a6"></div>
<div class="a" style="left:398px;top:356px;width:620px;height:460px;background-color:#fff;background-image:linear-gradient(to right,#d4d4d4 1px,transparent 1px),linear-gradient(#d4d4d4 1px,transparent 1px);background-size:64px 20px;background-position:0 0,0 -1px"></div>
<div class="a" style="left:398px;top:337px;width:620px;height:18px;background-image:linear-gradient(to right,#bdbdbd 1px,transparent 1px);background-size:64px 18px;background-position:0 0"></div>
<div class="a" style="left:374px;top:356px;width:24px;height:460px;background-image:linear-gradient(#bdbdbd 1px,transparent 1px);background-size:24px 20px;background-position:0 -1px"></div>
<div class="a" style="left:398px;top:336px;width:64px;height:19px;background:#d2d2d2"></div>
<div class="a" style="left:373px;top:356px;width:24px;height:19px;background:#d2d2d2"></div>
<svg style="left:383px;top:341px" width="12" height="11" viewBox="0 0 12 11"><path d="M12 0v11H0z" fill="#b4b4b4"/></svg>
<div class="ch" style="left:398px;color:#217346">A</div>
<div class="ch" style="left:463px">B</div>
<div class="ch" style="left:527px">C</div>
<div class="ch" style="left:591px">D</div>
<div class="ch" style="left:655px">E</div>
<div class="ch" style="left:719px">F</div>
<div class="ch" style="left:783px">G</div>
<div class="ch" style="left:847px">H</div>
<div class="ch" style="left:911px">I</div>
<div class="ch" style="left:975px">J</div>
<div class="rh" style="top:357px">1</div>
<div class="rh" style="top:377px">2</div>
<div class="rh" style="top:397px">3</div>
<div class="rh" style="top:417px">4</div>
<div class="rh" style="top:437px">5</div>
<div class="rh" style="top:457px">6</div>
<div class="rh" style="top:477px">7</div>
<div class="rh" style="top:497px">8</div>
<div class="rh" style="top:517px">9</div>
<div class="rh" style="top:537px">10</div>
<div class="rh" style="top:557px">11</div>
<div class="rh" style="top:577px">12</div>
<div class="rh" style="top:597px">13</div>
<div class="rh" style="top:617px">14</div>
<div class="rh" style="top:637px">15</div>
<div class="rh" style="top:657px">16</div>
<div class="rh" style="top:677px">17</div>
<div class="rh" style="top:697px">18</div>
<div class="rh" style="top:717px">19</div>
<div class="rh" style="top:737px">20</div>
<div class="rh" style="top:757px">21</div>
<div class="rh" style="top:777px">22</div>
<div class="rh" style="top:797px">23</div>
<div class="a" style="left:397px;top:354px;width:67px;height:23px;border:2px solid #217346"></div>
<div class="a" style="left:459px;top:372px;width:6px;height:6px;background:#217346;border:1px solid #fff;border-right:0;border-bottom:0"></div>
</div>
<div class="a" style="left:432px;top:417px;width:600px;height:400px;background:#f0f0f0;border:1px solid #6f6f6f;box-shadow:0 0 14px 2px rgba(0,0,0,.32)"></div>
<div class="a" style="left:433px;top:418px;width:584px;height:30px;background:#fff"></div>
<div class="a" style="left:1017px;top:417px;width:1px;height:390px;background:#6f6f6f"></div>
<svg style="left:442.5px;top:425.3px" width="14" height="14" viewBox="0 0 14 14"><circle cx="6.5" cy="6.5" r="6.2" fill="#0c9b4a"/><path d="M10 10.5l2.6 2.3" stroke="#0c9b4a" stroke-width="2.2"/><text x="6.5" y="9.7" font-size="8.8" font-weight="bold" fill="#fff" text-anchor="middle" font-family="Liberation Sans,sans-serif">N</text></svg>
<div class="t" style="left:461.56px;top:425.84px;line-height:14px;height:14px;font-size:12px;letter-spacing:-0.223px">Select Filter</div>
<div class="a" style="left:898px;top:432px;width:10px;height:1px;background:#c0c0c0"></div>
<div class="a" style="left:943px;top:427px;width:10px;height:10px;border:1px solid #222"></div>
<svg style="left:988.5px;top:426.6px" width="11" height="11" viewBox="0 0 11 11"><path d="M.5 .5l10 10M10.5 .5l-10 10" stroke="#222" stroke-width="1.1" fill="none"/></svg>
<div class="t" style="left:445.46px;top:469.04px;line-height:14px;height:14px;font-size:12px;letter-spacing:-0.452px">Search</div>
<div class="a" style="left:487px;top:464px;width:159px;height:24px;background:#fff;border:1px solid #7a7a7a"></div>
<div class="a" style="left:624px;top:466px;width:21px;height:20px;background:#d4d4d4;border:1px solid #adadad"></div>
<svg style="left:627px;top:469px" width="16" height="15" viewBox="0 0 16 15"><path d="M.5 1.5h10L7 6v6.5L4.5 11V6z" fill="#e9e9e9" stroke="#6d6d6d" stroke-width=".9"/><path d="M7 11l5-5 3 2.5-4.5 5h-2z" fill="#eef3fb" stroke="#55719c" stroke-width=".9"/></svg>
<div class="t" style="left:652.80px;top:469.04px;line-height:14px;height:14px;font-size:12px;letter-spacing:0.218px">Connection</div>
<div class="a" style="left:723px;top:465px;width:250px;height:23px;background:#f0f0f0;border:1px solid #7a7a7a"></div>
<div class="t" style="left:725.86px;top:469.04px;line-height:14px;height:14px;font-size:12px;letter-spacing:-0.502px">SalesDemo</div>
<div class="a" style="left:981px;top:465px;width:23px;height:23px;background:#e1e1e1;border:1px solid #adadad"></div>
<svg style="left:985px;top:469px" width="15" height="15" viewBox="0 0 15 15"><defs><linearGradient id="gr" x1="0" y1="0" x2="0" y2="1"><stop offset="0" stop-color="#63e463"/><stop offset="1" stop-color="#2cc42c"/></linearGradient></defs><rect x=".3" y=".3" width="14.4" height="14.4" rx="1.8" fill="url(#gr)" stroke="#3ec93e" stroke-width=".6"/><path d="M3 6.8c.8-3 5-4.2 7.5-1.5M12 8.2c-.8 3-5 4.2-7.5 1.5" fill="none" stroke="#fff" stroke-width="2"/><path d="M12.3 2.3v4.2H8.100zM2.7 12.7V8.5h4.2z" fill="#fff"/></svg>
<div class="a" style="left:445px;top:500px;width:560px;height:257px;background:#fff;border:1px solid #828790"></div>
<div class="a" style="left:761px;top:501px;width:1px;height:40px;background:#a0a0a0"></div>
<div class="a" style="left:1003px;top:521px;width:1px;height:20px;background:#a0a0a0"></div>
<div class="a" style="left:446px;top:541px;width:558px;height:1px;background:#a0a0a0"></div>
<div class="t" style="left:448.54px;top:505.24px;line-height:14px;height:14px;font-size:12px;letter-spacing:0.340px">Name</div>
<div class="t" style="left:763.62px;top:505.24px;line-height:14px;height:14px;font-size:12px;letter-spacing:0.320px">ID</div>
<svg style="left:989.7px;top:507.6px" width="8" height="7" viewBox="0 0 8 7"><path d="M4 .6L7.5 6.6H.5z" fill="none" stroke="#9a9a9a" stroke-width=".9"/></svg>
<div class="t" style="left:448.30px;top:525.14px;line-height:14px;height:14px;font-size:12px;letter-spacing:-0.344px">Year - 2018</div>
<div class="t" style="left:763.32px;top:525.14px;line-height:14px;height:14px;font-size:12px;letter-spacing:-0.467px">{16BB685F-F223-438A-A705-C0D5966C7282}</div>
<div class="a" style="left:849px;top:769px;width:73px;height:23px;background:#e1e1e1;border:2px solid #0078d7"></div>
<div class="t" style="left:876.86px;top:772.84px;line-height:14px;height:14px;font-size:12px;letter-spacing:-1.080px">OK</div>
<div class="a" style="left:931px;top:769px;width:73px;height:23px;background:#e1e1e1;border:1px solid #adadad"></div>
<div class="t" style="left:948.90px;top:772.84px;line-height:14px;height:14px;font-size:12px;letter-spacing:-0.088px">Cancel</div>
<svg style="left:0;top:0" width="1018" height="803" viewBox="0 0 1018 803"><rect x="339" y="684" width="27.5" height="20" fill="none" stroke="#ed1c24" stroke-width="3"/><path d="M366 684L484 540" stroke="#ed1c24" stroke-width="2.5" fill="none"/><rect x="701" y="687" width="3" height="4" fill="#ed1c24"/></svg>
</body>
</html>
